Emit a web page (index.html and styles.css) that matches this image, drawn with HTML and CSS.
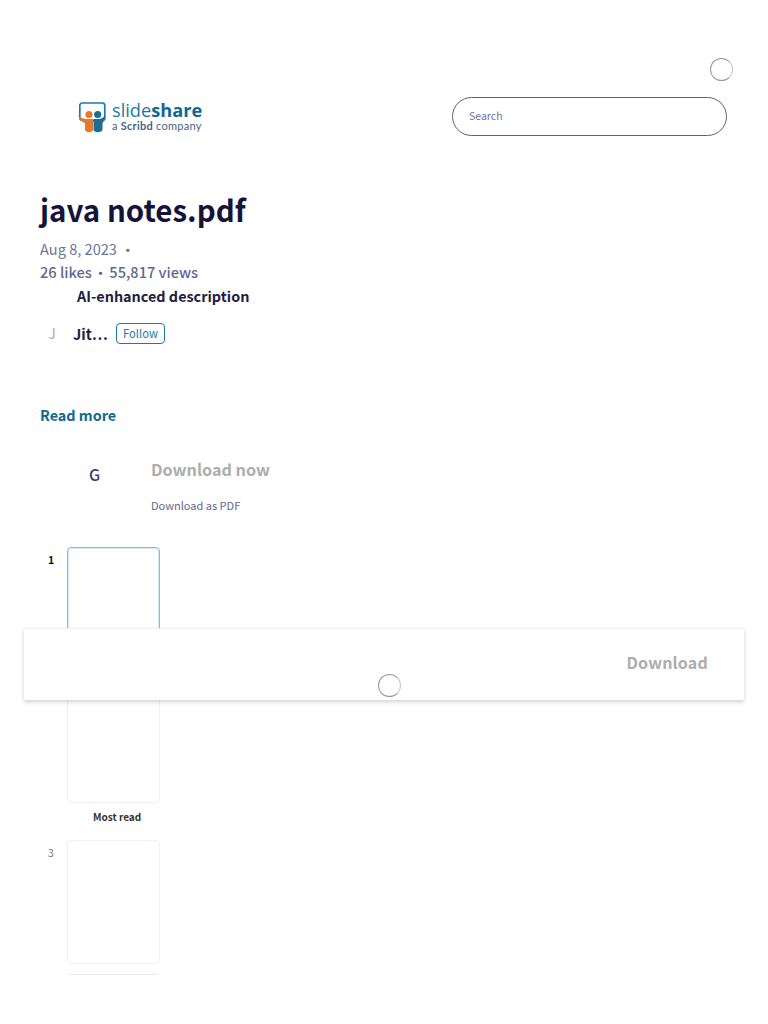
FILE: index.html
```html
<!DOCTYPE html>
<html lang="en">
<head>
<meta charset="utf-8">
<title>java notes.pdf</title>
<link rel="stylesheet" href="styles.css">
</head>
<body>
<div class="page">
  <header class="header">
    <div class="header-top"><span class="spinner"></span></div>
    <div class="header-row">
      <a class="logo">
        <svg class="logo-mark" width="28" height="31" viewBox="0 0 28 31">
          <rect x="1.8" y="1" width="25" height="17.5" rx="2.5" fill="#fff" stroke="#1a7ba6" stroke-width="1.7"/>
          <path d="M0 13 C3 16 6 17 9 17 L15 17 L15 27.5 C15 31 7 31 7 27.5 L7 21 C4 20 1.5 17.5 0 13Z" fill="#e8792a"/>
          <path d="M27.5 13 C25 16 23 17 20 17 L15.5 17 L15.5 27.5 C15.5 31 24.5 31 24.5 27.5 L24.5 21 C26 19.5 27 16.5 27.5 13Z" fill="#1a6e96"/>
          <circle cx="11" cy="12.5" r="3.6" fill="#e8792a"/>
          <circle cx="19.7" cy="12.5" r="3.6" fill="#1a6e96"/>
        </svg>
        <span class="logo-text">
          <span class="logo-name">slide<b>share</b></span>
          <span class="logo-sub">a <b>Scribd</b> company</span>
        </span>
      </a>
      <div class="search"><span class="search-label">Search</span></div>
    </div>
  </header>

  <main class="main">
    <h1 class="title">java notes.pdf</h1>
    <p class="meta">Aug 8, 2023 <span class="dot">•</span></p>
    <p class="stats">26 likes <span class="dot dot-tight">•</span> 55,817 views</p>
    <h2 class="ai">AI-enhanced description</h2>
    <div class="author">
      <span class="avatar">J</span>
      <span class="author-name">Jit…</span>
      <button class="follow">Follow</button>
    </div>
    <a class="read-more">Read more</a>
    <div class="download">
      <span class="g">G</span>
      <div class="download-copy">
        <div class="download-now">Download now</div>
        <div class="download-as">Download as PDF</div>
      </div>
    </div>
    <div class="thumbs">
      <div class="thumb-row"><span class="num num-active">1</span><div class="thumb thumb-active"></div></div>
      <div class="thumb-row"><span class="num"></span><div class="thumb"></div></div>
      <div class="most-read">Most read</div>
      <div class="thumb-row"><span class="num">3</span><div class="thumb"></div></div>
      <div class="thumb-next"></div>
    </div>
  </main>

  <div class="sticky">
    <span class="spinner spinner-bar"></span>
    <span class="sticky-download">Download</span>
  </div>
</div>
</body>
</html>
```
FILE: styles.css
```css
* { box-sizing: border-box; }
html, body { margin: 0; padding: 0; height: 1024px; overflow: hidden; background: #fff; }
body { font-family: "Noto Sans CJK SC", "Source Sans Pro", "Noto Sans", sans-serif; color: #1a1a3a; }
.page { position: relative; width: 768px; height: 1024px; overflow: hidden; }
p, h1, h2 { margin: 0; }

.header { padding: 58px 41px 0 0; }
.header-top { display: flex; justify-content: flex-end; height: 39px; margin-right: -6px; }
.spinner { display: block; width: 23px; height: 23px; border-radius: 50%; border: 1.5px solid #9a9a9a; border-right-color: #c8c8c8; }
.header-row { display: flex; justify-content: space-between; align-items: center; padding-left: 78px; height: 39px; }
.logo { display: flex; align-items: center; gap: 6px; margin-top: 1px; }
.logo-mark { display: block; margin-top: 1px; }
.logo-text { display: flex; flex-direction: column; }
.logo-name { font-family: "Open Sans", sans-serif; font-size: 18.2px; line-height: 17px; color: #1a7ba6; }
.logo-name b { font-weight: 700; color: #12688f; }
.logo-sub { font-family: Lato, sans-serif; font-size: 11px; line-height: 13px; color: #4d5f84; letter-spacing: .25px; }
.logo-sub b { font-weight: 700; }
.search { width: 275px; height: 39px; border: 1px solid #5a5f8c; border-radius: 20px; display: flex; align-items: center; padding-left: 16px; }
.search-label { font-size: 10.5px; line-height: 14px; margin-top: -2px; color: #6c7399; }

.main { padding: 54px 0 0 40px; }
.title { font-size: 29.5px; line-height: 38px; font-weight: 700; color: #14143a; }
.meta { margin-top: 10px; font-size: 14.6px; line-height: 22px; color: #6c7399; }
.stats { font-size: 14.6px; line-height: 23px; font-weight: 500; color: #61688f; }
.dot { font-size: 13px; line-height: 0; padding: 0 1px; font-weight: 700; }
.dot-tight { padding: 0; margin: 0 -1px; }
.ai { margin: 2px 0 0 37px; font-size: 14.4px; line-height: 22px; font-weight: 700; color: #1e1e42; }
.author { display: flex; align-items: center; margin-top: 15px; height: 22px; }
.avatar { width: 24px; text-align: center; font-size: 14px; color: #aaa; margin-right: 9px; }
.author-name { font-size: 14.6px; font-weight: 700; color: #1e1e42; width: 43px; }
.follow { font: inherit; font-size: 11.2px; line-height: 16px; height: 21px; width: 49px; padding: 0; background: #fff; color: #1a7ba6; border: 1px solid #1a7ba6; border-radius: 4px; }
.read-more { display: block; margin-top: 60px; font-size: 14.4px; line-height: 22px; font-weight: 700; color: #12688f; }

.download { display: flex; margin-top: 31px; }
.g { width: 111px; padding: 6px 0 0 49px; font-size: 16px; line-height: 22px; font-weight: 500; color: #3c3f68; }
.download-copy { display: flex; flex-direction: column; }
.download-now { font-size: 16.2px; line-height: 24px; font-weight: 700; color: #adadad; }
.download-as { margin-top: 16px; font-size: 11px; line-height: 16px; color: #61688f; }

.thumbs { margin-top: 34px; display: flex; flex-direction: column; }
.thumb-row { display: flex; margin-bottom: 8px; }
.num { width: 27px; padding: 5px 0 0 8px; font-size: 10.5px; line-height: 16px; color: #6c7399; }
.num-active { font-weight: 700; color: #111; }
.thumb { display: block; width: 93px; height: 124px; border: 1px solid #f0f0f8; border-radius: 4px; background: #fff; }
.thumb-active { border: 1px solid #7cc0dc; box-shadow: inset 0 0 0 1px #d4ebf4; }
.most-read { margin: -2px 0 15px 53px; font-size: 10px; line-height: 16px; font-weight: 700; color: #333; }
.thumb-next { margin: 2px 0 0 29px; width: 89px; height: 1px; background: #e8e8f4; }

.sticky { position: absolute; left: 24px; top: 628px; width: 720px; height: 72px; background: #fff; border-top: 1px solid #f2f2f2; box-shadow: 0 2px 4px rgba(0,0,0,.18); display: flex; justify-content: flex-end; align-items: flex-start; padding: 22px 36px 0 0; }
.sticky-download { font-size: 16px; line-height: 22px; font-weight: 700; color: #adadad; letter-spacing: .2px; }
.spinner-bar { position: absolute; left: 354px; top: 45px; }
```
